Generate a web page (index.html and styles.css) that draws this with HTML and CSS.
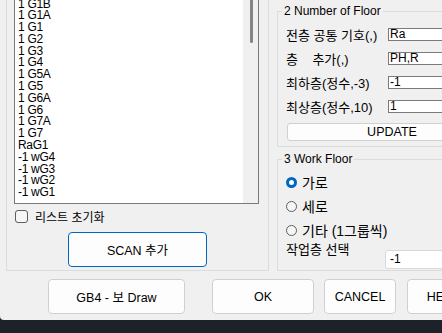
FILE: index.html
```html
<!DOCTYPE html>
<html lang="ko">
<head>
    <meta charset="UTF-8">
    <title>Floor Scan</title>
    <link rel="stylesheet" href="styles.css">
</head>
<body>
    <div class="dialog">
        <div class="main">
            <div class="scan-group">
                <div class="list-box">
                    <ul class="list">
                        <li>1 G1B</li>
                        <li>1 G1A</li>
                        <li>1 G1</li>
                        <li>1 G2</li>
                        <li>1 G3</li>
                        <li>1 G4</li>
                        <li>1 G5A</li>
                        <li>1 G5</li>
                        <li>1 G6A</li>
                        <li>1 G6</li>
                        <li>1 G7A</li>
                        <li>1 G7</li>
                        <li>RaG1</li>
                        <li>-1 wG4</li>
                        <li>-1 wG3</li>
                        <li>-1 wG2</li>
                        <li>-1 wG1</li>
                    </ul>
                    <div class="scrollbar"><div class="thumb"></div></div>
                </div>
                <label class="reset"><span class="box"></span>리스트 초기화</label>
                <button class="scan-btn">SCAN 추가</button>
            </div>
            <div class="side">
                <fieldset class="group floor">
                    <legend>2 Number of Floor</legend>
                    <div class="field"><span class="label">전층 공통 기호(,)</span><input value="Ra"></div>
                    <div class="field"><span class="label">층    추가(,)</span><input value="PH,R"></div>
                    <div class="field"><span class="label">최하층(정수,-3)</span><input value="-1"></div>
                    <div class="field"><span class="label">최상층(정수,10)</span><input value="1"></div>
                    <button class="update">UPDATE</button>
                </fieldset>
                <fieldset class="group work">
                    <legend>3 Work Floor</legend>
                    <div class="radio"><span class="dot on"></span>가로</div>
                    <div class="radio"><span class="dot"></span>세로</div>
                    <div class="radio"><span class="dot"></span>기타 (1그룹씩)</div>
                    <div class="pick"><span class="label">작업층 선택</span><div class="combo">-1</div></div>
                </fieldset>
            </div>
        </div>
        <div class="actions">
            <button class="btn draw">GB4 - 보 Draw</button>
            <button class="btn ok">OK</button>
            <button class="btn cancel">CANCEL</button>
            <button class="btn help">HELP</button>
        </div>
    </div>
</body>
</html>
```

FILE: styles.css
```css
* {
    box-sizing: border-box;
}

body {
    margin: 0;
    width: 442px;
    height: 333px;
    overflow: hidden;
    background: #1d2129;
    font-family: 'Liberation Sans', 'Noto Sans CJK KR', sans-serif;
    font-size: 12px;
    color: #000;
}

.dialog {
    width: 560px;
    height: 320px;
    background: #f0f0f0;
    border-bottom-left-radius: 4px;
}

.main {
    display: flex;
    height: 271px;
}

/* left: scanned list */
.scan-group {
    margin-left: 6px;
    width: 263px;
    height: 271px;
    border: 1px solid #dcdcdc;
    border-top: none;
    padding-left: 7px;
}

.list-box {
    display: flex;
    width: 245px;
    height: 204px;
    border: 1px solid #7a7a7a;
    border-top: none;
    background: #fff;
    overflow: hidden;
}

.list {
    flex: 1;
    list-style: none;
    margin: -1.5px 0 0;
    padding: 0 0 0 3px;
    font-size: 12px;
    letter-spacing: -0.3px;
    line-height: 11.8px;
}

.scrollbar {
    width: 15px;
    background: #f0f0f0;
    padding-left: 7px;
}

.thumb {
    width: 3px;
    height: 43px;
    background: #858585;
    border-radius: 0 0 2px 2px;
}

.reset {
    display: flex;
    align-items: center;
    gap: 7px;
    height: 13px;
    margin: 6px 0 0 1px;
}

.reset .box {
    flex: none;
    width: 13px;
    height: 13px;
    border: 1px solid #5d5d5d;
    border-radius: 3px;
    background: #f6f6f6;
}

.scan-btn {
    display: block;
    width: 139px;
    height: 35px;
    margin: 9px 0 0 54px;
    border: 1px solid #0067c0;
    border-radius: 4px;
    background: #fdfdfd;
    font: inherit;
    font-size: 12.5px;
    color: #000;
}

/* right: floor settings */
.side {
    margin-left: 8px;
    width: 240px;
}

.group {
    margin: 0;
    border: 1px solid #dcdcdc;
    padding: 0 0 0 8px;
    min-width: 0;
}

.group legend {
    margin-left: -4px;
    padding: 0 2px;
    line-height: 22px;
    font-size: 12px;
}

.floor {
    height: 147px;
}

.work {
    height: 123px;
    margin-top: 1px;
}

.field {
    display: flex;
    align-items: center;
    height: 24px;
}

.label {
    flex: none;
    width: 102px;
    font-size: 13px;
    white-space: pre;
}

.field input {
    flex: none;
    width: 120px;
    height: 13px;
    border: 1px solid #7a7a7a;
    padding: 0 1px;
    font: inherit;
    font-size: 12px;
    background: #fff;
}

.update {
    display: block;
    width: 210px;
    height: 18px;
    margin: 5px 0 0 1px;
    border: 1px solid #d0d0d0;
    border-radius: 3px;
    background: #fdfdfd;
    font: inherit;
    font-size: 12.5px;
    padding: 0;
}

.radio {
    display: flex;
    align-items: center;
    gap: 5px;
    height: 24px;
    font-size: 14px;
}

.dot {
    flex: none;
    width: 11px;
    height: 11px;
    border: 1px solid #5d5d5d;
    border-radius: 50%;
    background: #f6f6f6;
}

.dot.on {
    border: 3px solid #0067c0;
    background: #fff;
}

.pick {
    display: flex;
    height: 27px;
}

.pick .label {
    width: 99px;
    line-height: 16px;
}

.combo {
    flex: none;
    width: 120px;
    height: 19px;
    margin-top: 8px;
    border: 1px solid #d9d9d9;
    border-radius: 3px;
    background: #fff;
    padding-left: 4px;
    line-height: 17px;
}

/* bottom buttons */
.actions {
    display: flex;
    margin-top: 8px;
}

.btn {
    flex: none;
    height: 35px;
    border: 1px solid #d0d0d0;
    border-radius: 4px;
    background: #fdfdfd;
    font: inherit;
    font-size: 12.5px;
    color: #000;
    padding: 0;
}

.draw {
    width: 137px;
    margin-left: 48px;
}

.ok {
    width: 102px;
    margin-left: 27px;
}

.cancel {
    width: 72px;
    margin-left: 10px;
}

.help {
    width: 72px;
    margin-left: 11px;
}
```
